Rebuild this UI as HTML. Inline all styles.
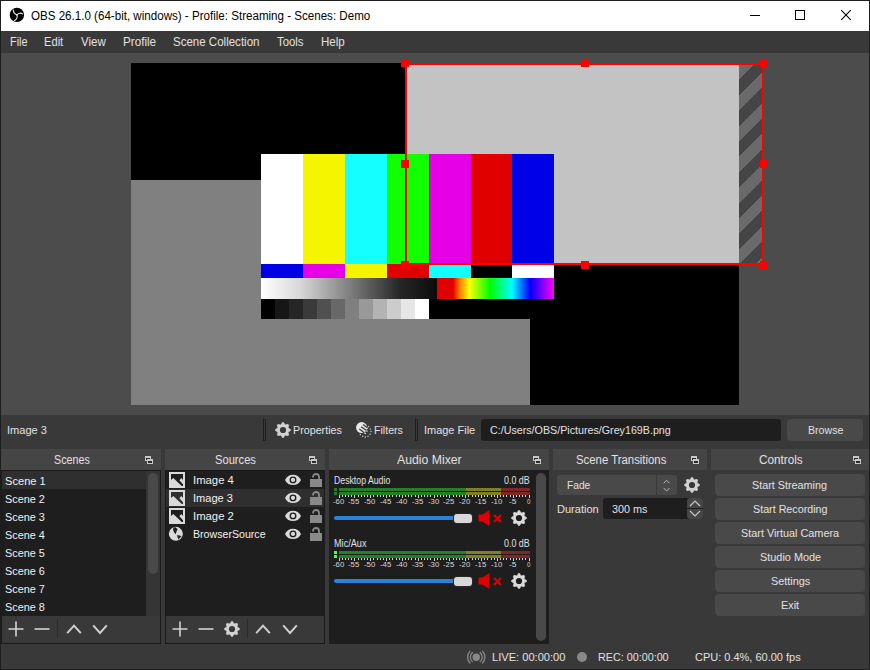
<!DOCTYPE html><html><head><meta charset="utf-8"><style>
*{box-sizing:border-box;margin:0;padding:0}
html,body{width:870px;height:670px;overflow:hidden;background:#3a393a;font-family:"Liberation Sans", sans-serif;font-size:12px;color:#e1e0e1}
.a{position:absolute}
.t{position:absolute;white-space:pre;line-height:1;transform-origin:0 0}
svg{position:absolute;overflow:visible}
</style></head><body>

<div class="a" style="left:0;top:0;width:870px;height:670px;background:#1e1e1e"></div>
<div class="a" style="left:1px;top:1px;width:868px;height:30px;background:#fff"></div>
<svg style="left:9px;top:7px" width="16" height="16" viewBox="0 0 16 16">
<circle cx="7.9" cy="7.9" r="7.2" fill="#000"/>
<g fill="none" stroke="#e8e8e8" stroke-width="1.2" stroke-linecap="round">
<path d="M7.9 7.9 C6.3 7.4, 4.5 6.4, 4.4 3.1"/>
<path d="M7.9 7.9 C9.2 6.2, 11.9 5.5, 13.4 6.9"/>
<path d="M7.9 7.9 C8.6 9.8, 7.8 12.5, 5.5 13.5"/>
</g></svg>
<div class="t" style="left:30.60px;top:9.80px;font-size:12px;font-weight:400;color:#000;transform:scaleX(0.9652);">OBS 26.1.0 (64-bit, windows) - Profile: Streaming - Scenes: Demo</div>
<div class="a" style="left:750px;top:15px;width:10px;height:1px;background:#000"></div>
<div class="a" style="left:795px;top:10px;width:10px;height:10px;border:1px solid #000"></div>
<svg style="left:841px;top:10px" width="10" height="10" viewBox="0 0 10 10"><path d="M0.2 0.2L9.8 9.8M9.8 0.2L0.2 9.8" stroke="#000" stroke-width="1.05"/></svg>
<div class="a" style="left:1px;top:31px;width:868px;height:22px;background:#3a393a"></div>
<div class="t" style="left:9.70px;top:35.90px;font-size:12px;font-weight:400;color:#e1e0e1;transform:scaleX(0.9053);">File</div>
<div class="t" style="left:44.10px;top:35.90px;font-size:12px;font-weight:400;color:#e1e0e1;transform:scaleX(0.9286);">Edit</div>
<div class="t" style="left:80.70px;top:35.90px;font-size:12px;font-weight:400;color:#e1e0e1;transform:scaleX(0.9577);">View</div>
<div class="t" style="left:122.60px;top:35.90px;font-size:12px;font-weight:400;color:#e1e0e1;transform:scaleX(0.9735);">Profile</div>
<div class="t" style="left:172.90px;top:35.90px;font-size:12px;font-weight:400;color:#e1e0e1;transform:scaleX(0.9600);">Scene Collection</div>
<div class="t" style="left:277.00px;top:35.90px;font-size:12px;font-weight:400;color:#e1e0e1;transform:scaleX(0.9429);">Tools</div>
<div class="t" style="left:320.70px;top:35.90px;font-size:12px;font-weight:400;color:#e1e0e1;transform:scaleX(0.9640);">Help</div>
<div class="a" style="left:1px;top:53px;width:868px;height:362px;background:#4c4c4c"></div>
<div class="a" style="left:131px;top:63px;width:608px;height:342px;background:#000"></div>
<div class="a" style="left:131px;top:180px;width:399px;height:225px;background:#808080"></div>
<div class="a" style="left:405px;top:63px;width:334px;height:202px;background:#c3c3c3"></div>
<div class="a" style="left:739px;top:63px;width:23px;height:202px;background:repeating-linear-gradient(135deg,#454545 0px,#454545 1.06px,#6a6a6a 1.06px,#6a6a6a 11.95px,#454545 11.95px,#454545 21.78px)"></div>
<div class="a" style="left:261px;top:154px;width:42px;height:110px;background:#ffffff"></div>
<div class="a" style="left:261px;top:264px;width:42px;height:14px;background:#0000e6"></div>
<div class="a" style="left:303px;top:154px;width:42px;height:110px;background:#f5f500"></div>
<div class="a" style="left:303px;top:264px;width:42px;height:14px;background:#e600e6"></div>
<div class="a" style="left:345px;top:154px;width:42px;height:110px;background:#14ffff"></div>
<div class="a" style="left:345px;top:264px;width:42px;height:14px;background:#f5f500"></div>
<div class="a" style="left:387px;top:154px;width:42px;height:110px;background:#11ff00"></div>
<div class="a" style="left:387px;top:264px;width:42px;height:14px;background:#e00000"></div>
<div class="a" style="left:429px;top:154px;width:42px;height:110px;background:#e600e6"></div>
<div class="a" style="left:429px;top:264px;width:42px;height:14px;background:#14ffff"></div>
<div class="a" style="left:471px;top:154px;width:41px;height:110px;background:#e00000"></div>
<div class="a" style="left:471px;top:264px;width:41px;height:14px;background:#000000"></div>
<div class="a" style="left:512px;top:154px;width:42px;height:110px;background:#0000e6"></div>
<div class="a" style="left:512px;top:264px;width:42px;height:14px;background:#ffffff"></div>
<div class="a" style="left:261px;top:278px;width:176px;height:21px;background:linear-gradient(90deg,#fff 0%,#d8d8d8 22%,#808080 50%,#262626 79%,#0c0c0c 100%)"></div>
<div class="a" style="left:437px;top:278px;width:117px;height:21px;background:linear-gradient(90deg,#e00000 0px,#e00000 16px,#ff8000 23px,#ffff00 32px,#00ff00 53px,#00ffff 75px,#0000ff 93px,#ff00ff 117px)"></div>
<div class="a" style="left:261px;top:299px;width:14px;height:20px;background:rgb(0,0,0)"></div>
<div class="a" style="left:275px;top:299px;width:14px;height:20px;background:rgb(22,22,22)"></div>
<div class="a" style="left:289px;top:299px;width:14px;height:20px;background:rgb(38,38,38)"></div>
<div class="a" style="left:303px;top:299px;width:14px;height:20px;background:rgb(58,58,58)"></div>
<div class="a" style="left:317px;top:299px;width:14px;height:20px;background:rgb(80,80,80)"></div>
<div class="a" style="left:331px;top:299px;width:14px;height:20px;background:rgb(104,104,104)"></div>
<div class="a" style="left:345px;top:299px;width:14px;height:20px;background:rgb(128,128,128)"></div>
<div class="a" style="left:359px;top:299px;width:14px;height:20px;background:rgb(153,153,153)"></div>
<div class="a" style="left:373px;top:299px;width:14px;height:20px;background:rgb(179,179,179)"></div>
<div class="a" style="left:387px;top:299px;width:14px;height:20px;background:rgb(204,204,204)"></div>
<div class="a" style="left:401px;top:299px;width:14px;height:20px;background:rgb(230,230,230)"></div>
<div class="a" style="left:415px;top:299px;width:14px;height:20px;background:rgb(255,255,255)"></div>
<div class="a" style="left:429px;top:299px;width:125px;height:20px;background:#000"></div>
<div class="a" style="left:405px;top:63px;width:359px;height:202px;border:2px solid #ff0000"></div>
<div class="a" style="left:401px;top:59px;width:8px;height:8px;background:#ff0000"></div>
<div class="a" style="left:401px;top:160px;width:8px;height:8px;background:#ff0000"></div>
<div class="a" style="left:401px;top:261px;width:8px;height:8px;background:#ff0000"></div>
<div class="a" style="left:581px;top:59px;width:8px;height:8px;background:#ff0000"></div>
<div class="a" style="left:581px;top:261px;width:8px;height:8px;background:#ff0000"></div>
<div class="a" style="left:760px;top:59px;width:8px;height:8px;background:#ff0000"></div>
<div class="a" style="left:760px;top:160px;width:8px;height:8px;background:#ff0000"></div>
<div class="a" style="left:760px;top:261px;width:8px;height:8px;background:#ff0000"></div>
<div class="a" style="left:1px;top:415px;width:868px;height:34px;background:#3a393a"></div>
<div class="t" style="left:6.90px;top:424.90px;font-size:11.5px;font-weight:400;color:#e1e0e1;transform:scaleX(0.9595);">Image 3</div>
<div class="a" style="left:263px;top:419px;width:3px;height:22px;border:1px solid #1e1e1e"></div>
<div class="a" style="left:415px;top:419px;width:3px;height:22px;border:1px solid #1e1e1e"></div>
<svg style="left:275px;top:422px" width="16" height="16" viewBox="0 0 16 16"><circle cx="8" cy="8" r="5.6" fill="#d2d2d2"/><polygon points="12.50,5.70 15.50,7.45 15.50,8.55 12.50,10.30" fill="#d2d2d2" stroke="#d2d2d2" stroke-width="0.7" stroke-linejoin="round"/><polygon points="12.81,9.56 13.69,12.91 12.91,13.69 9.56,12.81" fill="#d2d2d2" stroke="#d2d2d2" stroke-width="0.7" stroke-linejoin="round"/><polygon points="10.30,12.50 8.55,15.50 7.45,15.50 5.70,12.50" fill="#d2d2d2" stroke="#d2d2d2" stroke-width="0.7" stroke-linejoin="round"/><polygon points="6.44,12.81 3.09,13.69 2.31,12.91 3.19,9.56" fill="#d2d2d2" stroke="#d2d2d2" stroke-width="0.7" stroke-linejoin="round"/><polygon points="3.50,10.30 0.50,8.55 0.50,7.45 3.50,5.70" fill="#d2d2d2" stroke="#d2d2d2" stroke-width="0.7" stroke-linejoin="round"/><polygon points="3.19,6.44 2.31,3.09 3.09,2.31 6.44,3.19" fill="#d2d2d2" stroke="#d2d2d2" stroke-width="0.7" stroke-linejoin="round"/><polygon points="5.70,3.50 7.45,0.50 8.55,0.50 10.30,3.50" fill="#d2d2d2" stroke="#d2d2d2" stroke-width="0.7" stroke-linejoin="round"/><polygon points="9.56,3.19 12.91,2.31 13.69,3.09 12.81,6.44" fill="#d2d2d2" stroke="#d2d2d2" stroke-width="0.7" stroke-linejoin="round"/><circle cx="8" cy="8" r="3.1" fill="#3a393a"/></svg>
<div class="t" style="left:293.10px;top:424.80px;font-size:11.5px;font-weight:400;color:#e1e0e1;transform:scaleX(0.9327);">Properties</div>
<svg style="left:354px;top:420px" width="20" height="20" viewBox="0 0 20 20">
<circle cx="7.6" cy="7.6" r="5.5" fill="#e8e8e8"/>
<path d="M6 9.5 L11.5 13.5 M8 7.3 L13.2 11.2 M9.8 5.2 L13.6 8.2" stroke="#e8e8e8" stroke-width="1.2" stroke-linecap="round"/>
<path d="M5.3 9 L10.3 12.8 M7.1 6.7 L12.4 10.5 M9 4.5 L13.3 7.7" stroke="#3a393a" stroke-width="1.25"/>
<g fill="#c8c8c8"><circle cx="6.3" cy="14.6" r="0.75"/><circle cx="8.7" cy="16.3" r="0.75"/><circle cx="11.3" cy="17" r="0.75"/><circle cx="14" cy="16.3" r="0.75"/><circle cx="16.1" cy="14.3" r="0.75"/><circle cx="17" cy="11.6" r="0.75"/><circle cx="16.3" cy="9" r="0.75"/><circle cx="14.6" cy="6.6" r="0.75"/></g>
</svg>
<div class="t" style="left:374.40px;top:424.80px;font-size:11.5px;font-weight:400;color:#e1e0e1;transform:scaleX(0.9226);">Filters</div>
<div class="t" style="left:424.30px;top:424.80px;font-size:11.5px;font-weight:400;color:#e1e0e1;transform:scaleX(0.9528);">Image File</div>
<div class="a" style="left:481px;top:419px;width:300px;height:22px;background:#1f1e1f;border-radius:3px"></div>
<div class="t" style="left:490.10px;top:424.80px;font-size:11.5px;font-weight:400;color:#e1e0e1;transform:scaleX(0.9304);">C:/Users/OBS/Pictures/Grey169B.png</div>
<div class="a" style="left:787px;top:419px;width:76px;height:22px;background:#4a494a;border-radius:4px"></div>
<div class="t" style="left:807.90px;top:425.10px;font-size:11.5px;font-weight:400;color:#e1e0e1;transform:scaleX(0.9237);">Browse</div>
<div class="a" style="left:1px;top:449px;width:868px;height:220px;background:#3a393a"></div>
<div class="a" style="left:1px;top:449px;width:160px;height:21px;background:#464546"></div>
<div class="t" style="left:53.70px;top:453.80px;font-size:12px;font-weight:400;color:#e1e0e1;transform:scaleX(0.8950);">Scenes</div>
<svg style="left:145px;top:456px" width="8" height="8" viewBox="0 0 8 8">
<rect x="0.5" y="0.5" width="5" height="4" fill="#2c2c2c" stroke="#c8c8c8" stroke-width="1"/><rect x="0" y="0" width="6" height="2" fill="#c8c8c8"/>
<rect x="2.5" y="3.5" width="5" height="4" fill="#2c2c2c" stroke="#c8c8c8" stroke-width="1"/><rect x="2" y="3" width="6" height="2" fill="#c8c8c8"/>
</svg>
<div class="a" style="left:165px;top:449px;width:160px;height:21px;background:#464546"></div>
<div class="t" style="left:215.30px;top:453.80px;font-size:12px;font-weight:400;color:#e1e0e1;transform:scaleX(0.9295);">Sources</div>
<svg style="left:309px;top:456px" width="8" height="8" viewBox="0 0 8 8">
<rect x="0.5" y="0.5" width="5" height="4" fill="#2c2c2c" stroke="#c8c8c8" stroke-width="1"/><rect x="0" y="0" width="6" height="2" fill="#c8c8c8"/>
<rect x="2.5" y="3.5" width="5" height="4" fill="#2c2c2c" stroke="#c8c8c8" stroke-width="1"/><rect x="2" y="3" width="6" height="2" fill="#c8c8c8"/>
</svg>
<div class="a" style="left:329px;top:449px;width:220px;height:21px;background:#464546"></div>
<div class="t" style="left:397.40px;top:453.80px;font-size:12px;font-weight:400;color:#e1e0e1;transform:scaleX(1.0206);">Audio Mixer</div>
<svg style="left:533px;top:456px" width="8" height="8" viewBox="0 0 8 8">
<rect x="0.5" y="0.5" width="5" height="4" fill="#2c2c2c" stroke="#c8c8c8" stroke-width="1"/><rect x="0" y="0" width="6" height="2" fill="#c8c8c8"/>
<rect x="2.5" y="3.5" width="5" height="4" fill="#2c2c2c" stroke="#c8c8c8" stroke-width="1"/><rect x="2" y="3" width="6" height="2" fill="#c8c8c8"/>
</svg>
<div class="a" style="left:553px;top:449px;width:154px;height:21px;background:#464546"></div>
<div class="t" style="left:575.80px;top:453.80px;font-size:12px;font-weight:400;color:#e1e0e1;transform:scaleX(0.9474);">Scene Transitions</div>
<svg style="left:691px;top:456px" width="8" height="8" viewBox="0 0 8 8">
<rect x="0.5" y="0.5" width="5" height="4" fill="#2c2c2c" stroke="#c8c8c8" stroke-width="1"/><rect x="0" y="0" width="6" height="2" fill="#c8c8c8"/>
<rect x="2.5" y="3.5" width="5" height="4" fill="#2c2c2c" stroke="#c8c8c8" stroke-width="1"/><rect x="2" y="3" width="6" height="2" fill="#c8c8c8"/>
</svg>
<div class="a" style="left:711px;top:449px;width:158px;height:21px;background:#464546"></div>
<div class="t" style="left:758.60px;top:453.80px;font-size:12px;font-weight:400;color:#e1e0e1;transform:scaleX(0.9778);">Controls</div>
<svg style="left:853px;top:456px" width="8" height="8" viewBox="0 0 8 8">
<rect x="0.5" y="0.5" width="5" height="4" fill="#2c2c2c" stroke="#c8c8c8" stroke-width="1"/><rect x="0" y="0" width="6" height="2" fill="#c8c8c8"/>
<rect x="2.5" y="3.5" width="5" height="4" fill="#2c2c2c" stroke="#c8c8c8" stroke-width="1"/><rect x="2" y="3" width="6" height="2" fill="#c8c8c8"/>
</svg>
<div class="a" style="left:1px;top:470px;width:160px;height:174px;background:#1a1a1a"></div>
<div class="a" style="left:2px;top:471px;width:158px;height:145px;background:#1f1e1f"></div>
<div class="a" style="left:2px;top:471px;width:144px;height:18px;background:#302f30"></div>
<div class="a" style="left:146px;top:471px;width:14px;height:145px;background:#363536"></div>
<div class="a" style="left:148px;top:473px;width:10px;height:101px;background:#4a494a;border-radius:5px"></div>
<div class="t" style="left:5.20px;top:475.80px;font-size:11.5px;font-weight:400;color:#f0f0f0;transform:scaleX(0.9659);">Scene 1</div>
<div class="t" style="left:5.20px;top:493.80px;font-size:11.5px;font-weight:400;color:#f0f0f0;transform:scaleX(0.9429);">Scene 2</div>
<div class="t" style="left:5.20px;top:511.80px;font-size:11.5px;font-weight:400;color:#f0f0f0;transform:scaleX(0.9429);">Scene 3</div>
<div class="t" style="left:5.20px;top:529.80px;font-size:11.5px;font-weight:400;color:#f0f0f0;transform:scaleX(0.9429);">Scene 4</div>
<div class="t" style="left:5.20px;top:547.80px;font-size:11.5px;font-weight:400;color:#f0f0f0;transform:scaleX(0.9429);">Scene 5</div>
<div class="t" style="left:5.20px;top:565.80px;font-size:11.5px;font-weight:400;color:#f0f0f0;transform:scaleX(0.9429);">Scene 6</div>
<div class="t" style="left:5.20px;top:583.80px;font-size:11.5px;font-weight:400;color:#f0f0f0;transform:scaleX(0.9429);">Scene 7</div>
<div class="t" style="left:5.20px;top:601.80px;font-size:11.5px;font-weight:400;color:#f0f0f0;transform:scaleX(0.9429);">Scene 8</div>
<div class="a" style="left:2px;top:616px;width:158px;height:27px;background:#3a393a"></div>
<svg style="left:8px;top:621px" width="16" height="16" viewBox="0 0 16 16"><path d="M8 0.5V15.5M0.5 8H15.5" stroke="#d2d2d2" stroke-width="1.6"/></svg>
<svg style="left:34px;top:621px" width="16" height="16" viewBox="0 0 16 16"><path d="M0.5 8H15.5" stroke="#d2d2d2" stroke-width="1.6"/></svg>
<div class="a" style="left:57px;top:619px;width:1px;height:19px;background:#2c2b2c"></div>
<svg style="left:66px;top:621px" width="16" height="16" viewBox="0 0 16 16"><path d="M1.2 12.2L8 4.6L14.8 12.2" fill="none" stroke="#d2d2d2" stroke-width="1.9"/></svg>
<svg style="left:92px;top:621px" width="16" height="16" viewBox="0 0 16 16"><path d="M1.2 4.4L8 12L14.8 4.4" fill="none" stroke="#d2d2d2" stroke-width="1.9"/></svg>
<div class="a" style="left:165px;top:470px;width:160px;height:174px;background:#1a1a1a"></div>
<div class="a" style="left:166px;top:471px;width:158px;height:145px;background:#1f1e1f"></div>
<div class="a" style="left:166px;top:489px;width:158px;height:18px;background:#302f30"></div>
<div class="a" style="left:166px;top:616px;width:158px;height:27px;background:#3a393a"></div>
<svg style="left:172px;top:621px" width="16" height="16" viewBox="0 0 16 16"><path d="M8 0.5V15.5M0.5 8H15.5" stroke="#d2d2d2" stroke-width="1.6"/></svg>
<svg style="left:198px;top:621px" width="16" height="16" viewBox="0 0 16 16"><path d="M0.5 8H15.5" stroke="#d2d2d2" stroke-width="1.6"/></svg>
<svg style="left:224px;top:621px" width="16" height="16" viewBox="0 0 16 16"><circle cx="8" cy="8" r="5.6" fill="#d2d2d2"/><polygon points="12.50,5.70 15.50,7.45 15.50,8.55 12.50,10.30" fill="#d2d2d2" stroke="#d2d2d2" stroke-width="0.7" stroke-linejoin="round"/><polygon points="12.81,9.56 13.69,12.91 12.91,13.69 9.56,12.81" fill="#d2d2d2" stroke="#d2d2d2" stroke-width="0.7" stroke-linejoin="round"/><polygon points="10.30,12.50 8.55,15.50 7.45,15.50 5.70,12.50" fill="#d2d2d2" stroke="#d2d2d2" stroke-width="0.7" stroke-linejoin="round"/><polygon points="6.44,12.81 3.09,13.69 2.31,12.91 3.19,9.56" fill="#d2d2d2" stroke="#d2d2d2" stroke-width="0.7" stroke-linejoin="round"/><polygon points="3.50,10.30 0.50,8.55 0.50,7.45 3.50,5.70" fill="#d2d2d2" stroke="#d2d2d2" stroke-width="0.7" stroke-linejoin="round"/><polygon points="3.19,6.44 2.31,3.09 3.09,2.31 6.44,3.19" fill="#d2d2d2" stroke="#d2d2d2" stroke-width="0.7" stroke-linejoin="round"/><polygon points="5.70,3.50 7.45,0.50 8.55,0.50 10.30,3.50" fill="#d2d2d2" stroke="#d2d2d2" stroke-width="0.7" stroke-linejoin="round"/><polygon points="9.56,3.19 12.91,2.31 13.69,3.09 12.81,6.44" fill="#d2d2d2" stroke="#d2d2d2" stroke-width="0.7" stroke-linejoin="round"/><circle cx="8" cy="8" r="3.1" fill="#3a393a"/></svg>
<div class="a" style="left:247px;top:619px;width:1px;height:19px;background:#2c2b2c"></div>
<svg style="left:255px;top:621px" width="16" height="16" viewBox="0 0 16 16"><path d="M1.2 12.2L8 4.6L14.8 12.2" fill="none" stroke="#d2d2d2" stroke-width="1.9"/></svg>
<svg style="left:282px;top:621px" width="16" height="16" viewBox="0 0 16 16"><path d="M1.2 4.4L8 12L14.8 4.4" fill="none" stroke="#d2d2d2" stroke-width="1.9"/></svg>
<svg style="left:169px;top:472px" width="16" height="16" viewBox="0 0 16 16">
<rect x="1" y="1" width="14" height="14" fill="none" stroke="#dadada" stroke-width="2"/>
<polygon points="2,8 4.3,6 13,14.2 2,14" fill="#dadada"/>
<polygon points="10.4,8.3 12.3,6 14,8 14,12.3" fill="#dadada"/>
</svg>
<div class="t" style="left:193.10px;top:475.00px;font-size:11.5px;font-weight:400;color:#f0f0f0;transform:scaleX(0.9829);">Image 4</div>
<svg style="left:285px;top:475px" width="16" height="11" viewBox="0 0 16 11">
<path d="M0 4.9 C3 -2, 13 -2, 16 4.9 C13 11.8, 3 11.8, 0 4.9Z" fill="#dadada"/>
<circle cx="8" cy="4.9" r="3.45" fill="#1f1e1f"/>
<circle cx="8" cy="4.9" r="2.1" fill="#dadada"/>
</svg>
<svg style="left:310px;top:473px" width="12" height="15" viewBox="0 0 12 15">
<path d="M3 4.5 V4 A3 3 0 0 1 9 4 V7" fill="none" stroke="#8a898a" stroke-width="1.8"/>
<rect x="0" y="6" width="12" height="8" fill="#8a898a"/>
</svg>
<svg style="left:169px;top:490px" width="16" height="16" viewBox="0 0 16 16">
<rect x="1" y="1" width="14" height="14" fill="none" stroke="#dadada" stroke-width="2"/>
<polygon points="2,8 4.3,6 13,14.2 2,14" fill="#dadada"/>
<polygon points="10.4,8.3 12.3,6 14,8 14,12.3" fill="#dadada"/>
</svg>
<div class="t" style="left:193.10px;top:493.00px;font-size:11.5px;font-weight:400;color:#f0f0f0;transform:scaleX(0.9595);">Image 3</div>
<svg style="left:285px;top:493px" width="16" height="11" viewBox="0 0 16 11">
<path d="M0 4.9 C3 -2, 13 -2, 16 4.9 C13 11.8, 3 11.8, 0 4.9Z" fill="#dadada"/>
<circle cx="8" cy="4.9" r="3.45" fill="#1f1e1f"/>
<circle cx="8" cy="4.9" r="2.1" fill="#dadada"/>
</svg>
<svg style="left:310px;top:491px" width="12" height="15" viewBox="0 0 12 15">
<path d="M3 4.5 V4 A3 3 0 0 1 9 4 V7" fill="none" stroke="#8a898a" stroke-width="1.8"/>
<rect x="0" y="6" width="12" height="8" fill="#8a898a"/>
</svg>
<svg style="left:169px;top:508px" width="16" height="16" viewBox="0 0 16 16">
<rect x="1" y="1" width="14" height="14" fill="none" stroke="#dadada" stroke-width="2"/>
<polygon points="2,8 4.3,6 13,14.2 2,14" fill="#dadada"/>
<polygon points="10.4,8.3 12.3,6 14,8 14,12.3" fill="#dadada"/>
</svg>
<div class="t" style="left:193.10px;top:511.00px;font-size:11.5px;font-weight:400;color:#f0f0f0;transform:scaleX(0.9829);">Image 2</div>
<svg style="left:285px;top:511px" width="16" height="11" viewBox="0 0 16 11">
<path d="M0 4.9 C3 -2, 13 -2, 16 4.9 C13 11.8, 3 11.8, 0 4.9Z" fill="#dadada"/>
<circle cx="8" cy="4.9" r="3.45" fill="#1f1e1f"/>
<circle cx="8" cy="4.9" r="2.1" fill="#dadada"/>
</svg>
<svg style="left:310px;top:509px" width="12" height="15" viewBox="0 0 12 15">
<path d="M3 4.5 V4 A3 3 0 0 1 9 4 V7" fill="none" stroke="#8a898a" stroke-width="1.8"/>
<rect x="0" y="6" width="12" height="8" fill="#8a898a"/>
</svg>
<svg style="left:166px;top:524px" width="20" height="20" viewBox="0 0 20 20"><circle cx="9.85" cy="9.85" r="7" fill="#dadada"/>
<polygon points="7.3,3.5 9.5,3.3 11.6,5.3 10.6,7.2 9.7,10.2 8.2,8.6 7.2,6.3" fill="#1f1e1f"/>
<polygon points="11.2,11 13.6,11.4 15.6,12.3 13.5,14.1 12.8,15.7 11.6,13.6" fill="#1f1e1f"/></svg>
<div class="t" style="left:193.10px;top:529.00px;font-size:11.5px;font-weight:400;color:#f0f0f0;transform:scaleX(0.9231);">BrowserSource</div>
<svg style="left:285px;top:529px" width="16" height="11" viewBox="0 0 16 11">
<path d="M0 4.9 C3 -2, 13 -2, 16 4.9 C13 11.8, 3 11.8, 0 4.9Z" fill="#dadada"/>
<circle cx="8" cy="4.9" r="3.45" fill="#1f1e1f"/>
<circle cx="8" cy="4.9" r="2.1" fill="#dadada"/>
</svg>
<svg style="left:310px;top:527px" width="12" height="15" viewBox="0 0 12 15">
<path d="M3 4.5 V4 A3 3 0 0 1 9 4 V7" fill="none" stroke="#8a898a" stroke-width="1.8"/>
<rect x="0" y="6" width="12" height="8" fill="#8a898a"/>
</svg>
<div class="a" style="left:329px;top:470px;width:220px;height:174px;background:#1f1e1f"></div>
<div class="a" style="left:536px;top:473px;width:10px;height:168px;background:#4a494a;border-radius:5px"></div>
<div class="t" style="left:334.00px;top:475.70px;font-size:10px;font-weight:400;color:#e1e0e1;transform:scaleX(0.8723);">Desktop Audio</div>
<div class="t" style="left:504.10px;top:475.00px;font-size:11px;font-weight:400;color:#e1e0e1;transform:scaleX(0.8062);">0.0 dB</div>
<div class="a" style="left:334px;top:488px;width:3px;height:3px;background:#267f26"></div>
<div class="a" style="left:339px;top:488px;width:127px;height:3px;background:#267f26"></div>
<div class="a" style="left:466px;top:488px;width:35px;height:3px;background:#7f7f26"></div>
<div class="a" style="left:501px;top:488px;width:29px;height:3px;background:#7f2626"></div>
<div class="a" style="left:334px;top:492px;width:3px;height:3px;background:#267f26"></div>
<div class="a" style="left:339px;top:492px;width:127px;height:3px;background:#267f26"></div>
<div class="a" style="left:466px;top:492px;width:35px;height:3px;background:#7f7f26"></div>
<div class="a" style="left:501px;top:492px;width:29px;height:3px;background:#7f2626"></div>
<div class="a" style="left:339.0px;top:495px;width:1px;height:3px;background:#d0d0d0"></div>
<div class="a" style="left:342.0px;top:495px;width:1px;height:2px;background:#d0d0d0"></div>
<div class="a" style="left:345.0px;top:495px;width:1px;height:2px;background:#d0d0d0"></div>
<div class="a" style="left:348.0px;top:495px;width:1px;height:2px;background:#d0d0d0"></div>
<div class="a" style="left:351.0px;top:495px;width:1px;height:2px;background:#d0d0d0"></div>
<div class="a" style="left:354.0px;top:495px;width:1px;height:3px;background:#d0d0d0"></div>
<div class="a" style="left:358.0px;top:495px;width:1px;height:2px;background:#d0d0d0"></div>
<div class="a" style="left:361.0px;top:495px;width:1px;height:2px;background:#d0d0d0"></div>
<div class="a" style="left:364.0px;top:495px;width:1px;height:2px;background:#d0d0d0"></div>
<div class="a" style="left:367.0px;top:495px;width:1px;height:2px;background:#d0d0d0"></div>
<div class="a" style="left:370.0px;top:495px;width:1px;height:3px;background:#d0d0d0"></div>
<div class="a" style="left:373.0px;top:495px;width:1px;height:2px;background:#d0d0d0"></div>
<div class="a" style="left:377.0px;top:495px;width:1px;height:2px;background:#d0d0d0"></div>
<div class="a" style="left:380.0px;top:495px;width:1px;height:2px;background:#d0d0d0"></div>
<div class="a" style="left:383.0px;top:495px;width:1px;height:2px;background:#d0d0d0"></div>
<div class="a" style="left:386.0px;top:495px;width:1px;height:3px;background:#d0d0d0"></div>
<div class="a" style="left:389.0px;top:495px;width:1px;height:2px;background:#d0d0d0"></div>
<div class="a" style="left:392.0px;top:495px;width:1px;height:2px;background:#d0d0d0"></div>
<div class="a" style="left:396.0px;top:495px;width:1px;height:2px;background:#d0d0d0"></div>
<div class="a" style="left:399.0px;top:495px;width:1px;height:2px;background:#d0d0d0"></div>
<div class="a" style="left:402.0px;top:495px;width:1px;height:3px;background:#d0d0d0"></div>
<div class="a" style="left:405.0px;top:495px;width:1px;height:2px;background:#d0d0d0"></div>
<div class="a" style="left:408.0px;top:495px;width:1px;height:2px;background:#d0d0d0"></div>
<div class="a" style="left:411.0px;top:495px;width:1px;height:2px;background:#d0d0d0"></div>
<div class="a" style="left:415.0px;top:495px;width:1px;height:2px;background:#d0d0d0"></div>
<div class="a" style="left:418.0px;top:495px;width:1px;height:3px;background:#d0d0d0"></div>
<div class="a" style="left:421.0px;top:495px;width:1px;height:2px;background:#d0d0d0"></div>
<div class="a" style="left:424.0px;top:495px;width:1px;height:2px;background:#d0d0d0"></div>
<div class="a" style="left:427.0px;top:495px;width:1px;height:2px;background:#d0d0d0"></div>
<div class="a" style="left:430.0px;top:495px;width:1px;height:2px;background:#d0d0d0"></div>
<div class="a" style="left:434.0px;top:495px;width:1px;height:3px;background:#d0d0d0"></div>
<div class="a" style="left:437.0px;top:495px;width:1px;height:2px;background:#d0d0d0"></div>
<div class="a" style="left:440.0px;top:495px;width:1px;height:2px;background:#d0d0d0"></div>
<div class="a" style="left:443.0px;top:495px;width:1px;height:2px;background:#d0d0d0"></div>
<div class="a" style="left:446.0px;top:495px;width:1px;height:2px;background:#d0d0d0"></div>
<div class="a" style="left:449.0px;top:495px;width:1px;height:3px;background:#d0d0d0"></div>
<div class="a" style="left:453.0px;top:495px;width:1px;height:2px;background:#d0d0d0"></div>
<div class="a" style="left:456.0px;top:495px;width:1px;height:2px;background:#d0d0d0"></div>
<div class="a" style="left:459.0px;top:495px;width:1px;height:2px;background:#d0d0d0"></div>
<div class="a" style="left:462.0px;top:495px;width:1px;height:2px;background:#d0d0d0"></div>
<div class="a" style="left:465.0px;top:495px;width:1px;height:3px;background:#d0d0d0"></div>
<div class="a" style="left:468.0px;top:495px;width:1px;height:2px;background:#d0d0d0"></div>
<div class="a" style="left:472.0px;top:495px;width:1px;height:2px;background:#d0d0d0"></div>
<div class="a" style="left:475.0px;top:495px;width:1px;height:2px;background:#d0d0d0"></div>
<div class="a" style="left:478.0px;top:495px;width:1px;height:2px;background:#d0d0d0"></div>
<div class="a" style="left:481.0px;top:495px;width:1px;height:3px;background:#d0d0d0"></div>
<div class="a" style="left:484.0px;top:495px;width:1px;height:2px;background:#d0d0d0"></div>
<div class="a" style="left:487.0px;top:495px;width:1px;height:2px;background:#d0d0d0"></div>
<div class="a" style="left:491.0px;top:495px;width:1px;height:2px;background:#d0d0d0"></div>
<div class="a" style="left:494.0px;top:495px;width:1px;height:2px;background:#d0d0d0"></div>
<div class="a" style="left:497.0px;top:495px;width:1px;height:3px;background:#d0d0d0"></div>
<div class="a" style="left:500.0px;top:495px;width:1px;height:2px;background:#d0d0d0"></div>
<div class="a" style="left:503.0px;top:495px;width:1px;height:2px;background:#d0d0d0"></div>
<div class="a" style="left:506.0px;top:495px;width:1px;height:2px;background:#d0d0d0"></div>
<div class="a" style="left:510.0px;top:495px;width:1px;height:2px;background:#d0d0d0"></div>
<div class="a" style="left:513.0px;top:495px;width:1px;height:3px;background:#d0d0d0"></div>
<div class="a" style="left:516.0px;top:495px;width:1px;height:2px;background:#d0d0d0"></div>
<div class="a" style="left:519.0px;top:495px;width:1px;height:2px;background:#d0d0d0"></div>
<div class="a" style="left:522.0px;top:495px;width:1px;height:2px;background:#d0d0d0"></div>
<div class="a" style="left:525.0px;top:495px;width:1px;height:2px;background:#d0d0d0"></div>
<div class="a" style="left:529.0px;top:495px;width:1px;height:3px;background:#d0d0d0"></div>
<div class="t" style="left:333.39px;top:497.60px;font-size:7px;font-weight:400;color:#d8d8d8;transform:scaleX(1.1111);">-60</div>
<div class="t" style="left:348.39px;top:497.60px;font-size:7px;font-weight:400;color:#d8d8d8;transform:scaleX(1.1111);">-55</div>
<div class="t" style="left:364.39px;top:497.60px;font-size:7px;font-weight:400;color:#d8d8d8;transform:scaleX(1.1111);">-50</div>
<div class="t" style="left:380.39px;top:497.60px;font-size:7px;font-weight:400;color:#d8d8d8;transform:scaleX(1.1111);">-45</div>
<div class="t" style="left:396.39px;top:497.60px;font-size:7px;font-weight:400;color:#d8d8d8;transform:scaleX(1.1111);">-40</div>
<div class="t" style="left:412.39px;top:497.60px;font-size:7px;font-weight:400;color:#d8d8d8;transform:scaleX(1.1111);">-35</div>
<div class="t" style="left:428.39px;top:497.60px;font-size:7px;font-weight:400;color:#d8d8d8;transform:scaleX(1.1111);">-30</div>
<div class="t" style="left:443.39px;top:497.60px;font-size:7px;font-weight:400;color:#d8d8d8;transform:scaleX(1.1111);">-25</div>
<div class="t" style="left:459.39px;top:497.60px;font-size:7px;font-weight:400;color:#d8d8d8;transform:scaleX(1.1111);">-20</div>
<div class="t" style="left:475.39px;top:497.60px;font-size:7px;font-weight:400;color:#d8d8d8;transform:scaleX(1.1111);">-15</div>
<div class="t" style="left:491.39px;top:497.60px;font-size:7px;font-weight:400;color:#d8d8d8;transform:scaleX(1.1111);">-10</div>
<div class="t" style="left:509.30px;top:497.60px;font-size:7px;font-weight:400;color:#d8d8d8;transform:scaleX(1.2000);">-5</div>
<div class="t" style="left:527.00px;top:497.60px;font-size:7px;font-weight:400;color:#d8d8d8;transform:scaleX(0.8750);">0</div>
<div class="a" style="left:334px;top:516px;width:125px;height:4px;background:#2a82da;border-radius:2px"></div>
<div class="a" style="left:454px;top:513.5px;width:18px;height:9px;background:#d8d8d8;border-radius:3px;box-shadow:0 0 0 1px #2a2a2a"></div>
<svg style="left:478px;top:510px" width="26" height="16" viewBox="0 0 26 16">
<path d="M0.5 4.5H4.5L11.5 0V16L4.5 11.5H0.5Z" fill="#e00000"/>
<path d="M16 5L23 12M23 5L16 12" stroke="#e00000" stroke-width="2"/></svg>
<svg style="left:511px;top:510px" width="16" height="16" viewBox="0 0 16 16"><circle cx="8" cy="8" r="5.6" fill="#dadada"/><polygon points="12.50,5.70 15.50,7.45 15.50,8.55 12.50,10.30" fill="#dadada" stroke="#dadada" stroke-width="0.7" stroke-linejoin="round"/><polygon points="12.81,9.56 13.69,12.91 12.91,13.69 9.56,12.81" fill="#dadada" stroke="#dadada" stroke-width="0.7" stroke-linejoin="round"/><polygon points="10.30,12.50 8.55,15.50 7.45,15.50 5.70,12.50" fill="#dadada" stroke="#dadada" stroke-width="0.7" stroke-linejoin="round"/><polygon points="6.44,12.81 3.09,13.69 2.31,12.91 3.19,9.56" fill="#dadada" stroke="#dadada" stroke-width="0.7" stroke-linejoin="round"/><polygon points="3.50,10.30 0.50,8.55 0.50,7.45 3.50,5.70" fill="#dadada" stroke="#dadada" stroke-width="0.7" stroke-linejoin="round"/><polygon points="3.19,6.44 2.31,3.09 3.09,2.31 6.44,3.19" fill="#dadada" stroke="#dadada" stroke-width="0.7" stroke-linejoin="round"/><polygon points="5.70,3.50 7.45,0.50 8.55,0.50 10.30,3.50" fill="#dadada" stroke="#dadada" stroke-width="0.7" stroke-linejoin="round"/><polygon points="9.56,3.19 12.91,2.31 13.69,3.09 12.81,6.44" fill="#dadada" stroke="#dadada" stroke-width="0.7" stroke-linejoin="round"/><circle cx="8" cy="8" r="3.1" fill="#1f1e1f"/></svg>
<div class="t" style="left:334.00px;top:538.70px;font-size:10px;font-weight:400;color:#e1e0e1;transform:scaleX(0.9143);">Mic/Aux</div>
<div class="t" style="left:504.10px;top:538.00px;font-size:11px;font-weight:400;color:#e1e0e1;transform:scaleX(0.8062);">0.0 dB</div>
<div class="a" style="left:334px;top:551px;width:3px;height:3px;background:#4cff4c"></div>
<div class="a" style="left:339px;top:551px;width:127px;height:3px;background:#267f26"></div>
<div class="a" style="left:466px;top:551px;width:35px;height:3px;background:#7f7f26"></div>
<div class="a" style="left:501px;top:551px;width:29px;height:3px;background:#7f2626"></div>
<div class="a" style="left:334px;top:555px;width:3px;height:3px;background:#4cff4c"></div>
<div class="a" style="left:339px;top:555px;width:127px;height:3px;background:#267f26"></div>
<div class="a" style="left:466px;top:555px;width:35px;height:3px;background:#7f7f26"></div>
<div class="a" style="left:501px;top:555px;width:29px;height:3px;background:#7f2626"></div>
<div class="a" style="left:339.0px;top:558px;width:1px;height:3px;background:#d0d0d0"></div>
<div class="a" style="left:342.0px;top:558px;width:1px;height:2px;background:#d0d0d0"></div>
<div class="a" style="left:345.0px;top:558px;width:1px;height:2px;background:#d0d0d0"></div>
<div class="a" style="left:348.0px;top:558px;width:1px;height:2px;background:#d0d0d0"></div>
<div class="a" style="left:351.0px;top:558px;width:1px;height:2px;background:#d0d0d0"></div>
<div class="a" style="left:354.0px;top:558px;width:1px;height:3px;background:#d0d0d0"></div>
<div class="a" style="left:358.0px;top:558px;width:1px;height:2px;background:#d0d0d0"></div>
<div class="a" style="left:361.0px;top:558px;width:1px;height:2px;background:#d0d0d0"></div>
<div class="a" style="left:364.0px;top:558px;width:1px;height:2px;background:#d0d0d0"></div>
<div class="a" style="left:367.0px;top:558px;width:1px;height:2px;background:#d0d0d0"></div>
<div class="a" style="left:370.0px;top:558px;width:1px;height:3px;background:#d0d0d0"></div>
<div class="a" style="left:373.0px;top:558px;width:1px;height:2px;background:#d0d0d0"></div>
<div class="a" style="left:377.0px;top:558px;width:1px;height:2px;background:#d0d0d0"></div>
<div class="a" style="left:380.0px;top:558px;width:1px;height:2px;background:#d0d0d0"></div>
<div class="a" style="left:383.0px;top:558px;width:1px;height:2px;background:#d0d0d0"></div>
<div class="a" style="left:386.0px;top:558px;width:1px;height:3px;background:#d0d0d0"></div>
<div class="a" style="left:389.0px;top:558px;width:1px;height:2px;background:#d0d0d0"></div>
<div class="a" style="left:392.0px;top:558px;width:1px;height:2px;background:#d0d0d0"></div>
<div class="a" style="left:396.0px;top:558px;width:1px;height:2px;background:#d0d0d0"></div>
<div class="a" style="left:399.0px;top:558px;width:1px;height:2px;background:#d0d0d0"></div>
<div class="a" style="left:402.0px;top:558px;width:1px;height:3px;background:#d0d0d0"></div>
<div class="a" style="left:405.0px;top:558px;width:1px;height:2px;background:#d0d0d0"></div>
<div class="a" style="left:408.0px;top:558px;width:1px;height:2px;background:#d0d0d0"></div>
<div class="a" style="left:411.0px;top:558px;width:1px;height:2px;background:#d0d0d0"></div>
<div class="a" style="left:415.0px;top:558px;width:1px;height:2px;background:#d0d0d0"></div>
<div class="a" style="left:418.0px;top:558px;width:1px;height:3px;background:#d0d0d0"></div>
<div class="a" style="left:421.0px;top:558px;width:1px;height:2px;background:#d0d0d0"></div>
<div class="a" style="left:424.0px;top:558px;width:1px;height:2px;background:#d0d0d0"></div>
<div class="a" style="left:427.0px;top:558px;width:1px;height:2px;background:#d0d0d0"></div>
<div class="a" style="left:430.0px;top:558px;width:1px;height:2px;background:#d0d0d0"></div>
<div class="a" style="left:434.0px;top:558px;width:1px;height:3px;background:#d0d0d0"></div>
<div class="a" style="left:437.0px;top:558px;width:1px;height:2px;background:#d0d0d0"></div>
<div class="a" style="left:440.0px;top:558px;width:1px;height:2px;background:#d0d0d0"></div>
<div class="a" style="left:443.0px;top:558px;width:1px;height:2px;background:#d0d0d0"></div>
<div class="a" style="left:446.0px;top:558px;width:1px;height:2px;background:#d0d0d0"></div>
<div class="a" style="left:449.0px;top:558px;width:1px;height:3px;background:#d0d0d0"></div>
<div class="a" style="left:453.0px;top:558px;width:1px;height:2px;background:#d0d0d0"></div>
<div class="a" style="left:456.0px;top:558px;width:1px;height:2px;background:#d0d0d0"></div>
<div class="a" style="left:459.0px;top:558px;width:1px;height:2px;background:#d0d0d0"></div>
<div class="a" style="left:462.0px;top:558px;width:1px;height:2px;background:#d0d0d0"></div>
<div class="a" style="left:465.0px;top:558px;width:1px;height:3px;background:#d0d0d0"></div>
<div class="a" style="left:468.0px;top:558px;width:1px;height:2px;background:#d0d0d0"></div>
<div class="a" style="left:472.0px;top:558px;width:1px;height:2px;background:#d0d0d0"></div>
<div class="a" style="left:475.0px;top:558px;width:1px;height:2px;background:#d0d0d0"></div>
<div class="a" style="left:478.0px;top:558px;width:1px;height:2px;background:#d0d0d0"></div>
<div class="a" style="left:481.0px;top:558px;width:1px;height:3px;background:#d0d0d0"></div>
<div class="a" style="left:484.0px;top:558px;width:1px;height:2px;background:#d0d0d0"></div>
<div class="a" style="left:487.0px;top:558px;width:1px;height:2px;background:#d0d0d0"></div>
<div class="a" style="left:491.0px;top:558px;width:1px;height:2px;background:#d0d0d0"></div>
<div class="a" style="left:494.0px;top:558px;width:1px;height:2px;background:#d0d0d0"></div>
<div class="a" style="left:497.0px;top:558px;width:1px;height:3px;background:#d0d0d0"></div>
<div class="a" style="left:500.0px;top:558px;width:1px;height:2px;background:#d0d0d0"></div>
<div class="a" style="left:503.0px;top:558px;width:1px;height:2px;background:#d0d0d0"></div>
<div class="a" style="left:506.0px;top:558px;width:1px;height:2px;background:#d0d0d0"></div>
<div class="a" style="left:510.0px;top:558px;width:1px;height:2px;background:#d0d0d0"></div>
<div class="a" style="left:513.0px;top:558px;width:1px;height:3px;background:#d0d0d0"></div>
<div class="a" style="left:516.0px;top:558px;width:1px;height:2px;background:#d0d0d0"></div>
<div class="a" style="left:519.0px;top:558px;width:1px;height:2px;background:#d0d0d0"></div>
<div class="a" style="left:522.0px;top:558px;width:1px;height:2px;background:#d0d0d0"></div>
<div class="a" style="left:525.0px;top:558px;width:1px;height:2px;background:#d0d0d0"></div>
<div class="a" style="left:529.0px;top:558px;width:1px;height:3px;background:#d0d0d0"></div>
<div class="t" style="left:333.39px;top:560.60px;font-size:7px;font-weight:400;color:#d8d8d8;transform:scaleX(1.1111);">-60</div>
<div class="t" style="left:348.39px;top:560.60px;font-size:7px;font-weight:400;color:#d8d8d8;transform:scaleX(1.1111);">-55</div>
<div class="t" style="left:364.39px;top:560.60px;font-size:7px;font-weight:400;color:#d8d8d8;transform:scaleX(1.1111);">-50</div>
<div class="t" style="left:380.39px;top:560.60px;font-size:7px;font-weight:400;color:#d8d8d8;transform:scaleX(1.1111);">-45</div>
<div class="t" style="left:396.39px;top:560.60px;font-size:7px;font-weight:400;color:#d8d8d8;transform:scaleX(1.1111);">-40</div>
<div class="t" style="left:412.39px;top:560.60px;font-size:7px;font-weight:400;color:#d8d8d8;transform:scaleX(1.1111);">-35</div>
<div class="t" style="left:428.39px;top:560.60px;font-size:7px;font-weight:400;color:#d8d8d8;transform:scaleX(1.1111);">-30</div>
<div class="t" style="left:443.39px;top:560.60px;font-size:7px;font-weight:400;color:#d8d8d8;transform:scaleX(1.1111);">-25</div>
<div class="t" style="left:459.39px;top:560.60px;font-size:7px;font-weight:400;color:#d8d8d8;transform:scaleX(1.1111);">-20</div>
<div class="t" style="left:475.39px;top:560.60px;font-size:7px;font-weight:400;color:#d8d8d8;transform:scaleX(1.1111);">-15</div>
<div class="t" style="left:491.39px;top:560.60px;font-size:7px;font-weight:400;color:#d8d8d8;transform:scaleX(1.1111);">-10</div>
<div class="t" style="left:509.30px;top:560.60px;font-size:7px;font-weight:400;color:#d8d8d8;transform:scaleX(1.2000);">-5</div>
<div class="t" style="left:527.00px;top:560.60px;font-size:7px;font-weight:400;color:#d8d8d8;transform:scaleX(0.8750);">0</div>
<div class="a" style="left:334px;top:579px;width:125px;height:4px;background:#2a82da;border-radius:2px"></div>
<div class="a" style="left:454px;top:576.5px;width:18px;height:9px;background:#d8d8d8;border-radius:3px;box-shadow:0 0 0 1px #2a2a2a"></div>
<svg style="left:478px;top:573px" width="26" height="16" viewBox="0 0 26 16">
<path d="M0.5 4.5H4.5L11.5 0V16L4.5 11.5H0.5Z" fill="#e00000"/>
<path d="M16 5L23 12M23 5L16 12" stroke="#e00000" stroke-width="2"/></svg>
<svg style="left:511px;top:573px" width="16" height="16" viewBox="0 0 16 16"><circle cx="8" cy="8" r="5.6" fill="#dadada"/><polygon points="12.50,5.70 15.50,7.45 15.50,8.55 12.50,10.30" fill="#dadada" stroke="#dadada" stroke-width="0.7" stroke-linejoin="round"/><polygon points="12.81,9.56 13.69,12.91 12.91,13.69 9.56,12.81" fill="#dadada" stroke="#dadada" stroke-width="0.7" stroke-linejoin="round"/><polygon points="10.30,12.50 8.55,15.50 7.45,15.50 5.70,12.50" fill="#dadada" stroke="#dadada" stroke-width="0.7" stroke-linejoin="round"/><polygon points="6.44,12.81 3.09,13.69 2.31,12.91 3.19,9.56" fill="#dadada" stroke="#dadada" stroke-width="0.7" stroke-linejoin="round"/><polygon points="3.50,10.30 0.50,8.55 0.50,7.45 3.50,5.70" fill="#dadada" stroke="#dadada" stroke-width="0.7" stroke-linejoin="round"/><polygon points="3.19,6.44 2.31,3.09 3.09,2.31 6.44,3.19" fill="#dadada" stroke="#dadada" stroke-width="0.7" stroke-linejoin="round"/><polygon points="5.70,3.50 7.45,0.50 8.55,0.50 10.30,3.50" fill="#dadada" stroke="#dadada" stroke-width="0.7" stroke-linejoin="round"/><polygon points="9.56,3.19 12.91,2.31 13.69,3.09 12.81,6.44" fill="#dadada" stroke="#dadada" stroke-width="0.7" stroke-linejoin="round"/><circle cx="8" cy="8" r="3.1" fill="#1f1e1f"/></svg>
<div class="a" style="left:557px;top:475px;width:120px;height:20px;background:#4a494a;border-radius:3px"></div>
<div class="a" style="left:656px;top:475px;width:1px;height:20px;background:#3a393a"></div>
<svg style="left:663px;top:479px" width="8" height="14" viewBox="0 0 8 14"><path d="M0.7 4.3L3.6 1.3L6.5 4.3M0.7 9L3.6 12L6.5 9" fill="none" stroke="#c8c8c8" stroke-width="0.9"/></svg>
<div class="t" style="left:567.20px;top:479.90px;font-size:11.5px;font-weight:400;color:#e1e0e1;transform:scaleX(0.8885);">Fade</div>
<svg style="left:684px;top:477px" width="16" height="16" viewBox="0 0 16 16"><circle cx="8" cy="8" r="5.6" fill="#d2d2d2"/><polygon points="12.50,5.70 15.50,7.45 15.50,8.55 12.50,10.30" fill="#d2d2d2" stroke="#d2d2d2" stroke-width="0.7" stroke-linejoin="round"/><polygon points="12.81,9.56 13.69,12.91 12.91,13.69 9.56,12.81" fill="#d2d2d2" stroke="#d2d2d2" stroke-width="0.7" stroke-linejoin="round"/><polygon points="10.30,12.50 8.55,15.50 7.45,15.50 5.70,12.50" fill="#d2d2d2" stroke="#d2d2d2" stroke-width="0.7" stroke-linejoin="round"/><polygon points="6.44,12.81 3.09,13.69 2.31,12.91 3.19,9.56" fill="#d2d2d2" stroke="#d2d2d2" stroke-width="0.7" stroke-linejoin="round"/><polygon points="3.50,10.30 0.50,8.55 0.50,7.45 3.50,5.70" fill="#d2d2d2" stroke="#d2d2d2" stroke-width="0.7" stroke-linejoin="round"/><polygon points="3.19,6.44 2.31,3.09 3.09,2.31 6.44,3.19" fill="#d2d2d2" stroke="#d2d2d2" stroke-width="0.7" stroke-linejoin="round"/><polygon points="5.70,3.50 7.45,0.50 8.55,0.50 10.30,3.50" fill="#d2d2d2" stroke="#d2d2d2" stroke-width="0.7" stroke-linejoin="round"/><polygon points="9.56,3.19 12.91,2.31 13.69,3.09 12.81,6.44" fill="#d2d2d2" stroke="#d2d2d2" stroke-width="0.7" stroke-linejoin="round"/><circle cx="8" cy="8" r="3.1" fill="#3a393a"/></svg>
<div class="t" style="left:557.10px;top:503.80px;font-size:11.5px;font-weight:400;color:#e1e0e1;transform:scaleX(0.9605);">Duration</div>
<div class="a" style="left:603px;top:498px;width:100px;height:21px;background:#1f1e1f;border-radius:3px"></div>
<div class="t" style="left:611.80px;top:503.80px;font-size:11.5px;font-weight:400;color:#e1e0e1;transform:scaleX(0.9421);">300 ms</div>
<div class="a" style="left:687px;top:498px;width:16px;height:10px;background:#474647;border-radius:3px 3px 0 0"></div>
<div class="a" style="left:687px;top:509px;width:16px;height:10px;background:#474647;border-radius:0 0 3px 3px"></div>
<svg style="left:688px;top:499px" width="14" height="20" viewBox="0 0 14 20"><path d="M2 7L7 2L12 7M2 12L7 17L12 12" fill="none" stroke="#c8c8c8" stroke-width="1.2"/></svg>
<div class="a" style="left:715px;top:474px;width:150px;height:22px;background:#4a494a;border-radius:4px"></div>
<div class="t" style="left:752.40px;top:480.20px;font-size:11.5px;font-weight:400;color:#e1e0e1;transform:scaleX(0.9375);">Start Streaming</div>
<div class="a" style="left:715px;top:498px;width:150px;height:22px;background:#4a494a;border-radius:4px"></div>
<div class="t" style="left:752.80px;top:504.20px;font-size:11.5px;font-weight:400;color:#e1e0e1;transform:scaleX(0.9325);">Start Recording</div>
<div class="a" style="left:715px;top:522px;width:150px;height:22px;background:#4a494a;border-radius:4px"></div>
<div class="t" style="left:741.00px;top:528.20px;font-size:11.5px;font-weight:400;color:#e1e0e1;transform:scaleX(0.9433);">Start Virtual Camera</div>
<div class="a" style="left:715px;top:546px;width:150px;height:22px;background:#4a494a;border-radius:4px"></div>
<div class="t" style="left:759.60px;top:552.20px;font-size:11.5px;font-weight:400;color:#e1e0e1;transform:scaleX(0.9469);">Studio Mode</div>
<div class="a" style="left:715px;top:570px;width:150px;height:22px;background:#4a494a;border-radius:4px"></div>
<div class="t" style="left:770.70px;top:576.20px;font-size:11.5px;font-weight:400;color:#e1e0e1;transform:scaleX(0.9439);">Settings</div>
<div class="a" style="left:715px;top:594px;width:150px;height:22px;background:#4a494a;border-radius:4px"></div>
<div class="t" style="left:781.10px;top:600.20px;font-size:11.5px;font-weight:400;color:#e1e0e1;transform:scaleX(0.9421);">Exit</div>
<svg style="left:464px;top:647px" width="26" height="20" viewBox="0 0 26 20">
<circle cx="12.25" cy="10.2" r="3.7" fill="#8a898a"/>
<path d="M8.75 5.39 A5.95 5.95 0 0 0 8.75 15.01 M15.75 5.39 A5.95 5.95 0 0 1 15.75 15.01 M6.32 3.90 A8.65 8.65 0 0 0 6.32 16.50 M18.18 3.90 A8.65 8.65 0 0 1 18.18 16.50 " fill="none" stroke="#8a898a" stroke-width="1.3"/></svg>
<div class="t" style="left:492.20px;top:652.00px;font-size:11.5px;font-weight:400;color:#e1e0e1;transform:scaleX(0.9645);">LIVE: 00:00:00</div>
<div class="a" style="left:577px;top:652px;width:10px;height:10px;border-radius:5px;background:#8a898a"></div>
<div class="t" style="left:598.20px;top:651.60px;font-size:11.5px;font-weight:400;color:#e1e0e1;transform:scaleX(0.9360);">REC: 00:00:00</div>
<div class="t" style="left:695.20px;top:652.10px;font-size:11.5px;font-weight:400;color:#e1e0e1;transform:scaleX(0.9555);">CPU: 0.4%, 60.00 fps</div>
</body></html>
